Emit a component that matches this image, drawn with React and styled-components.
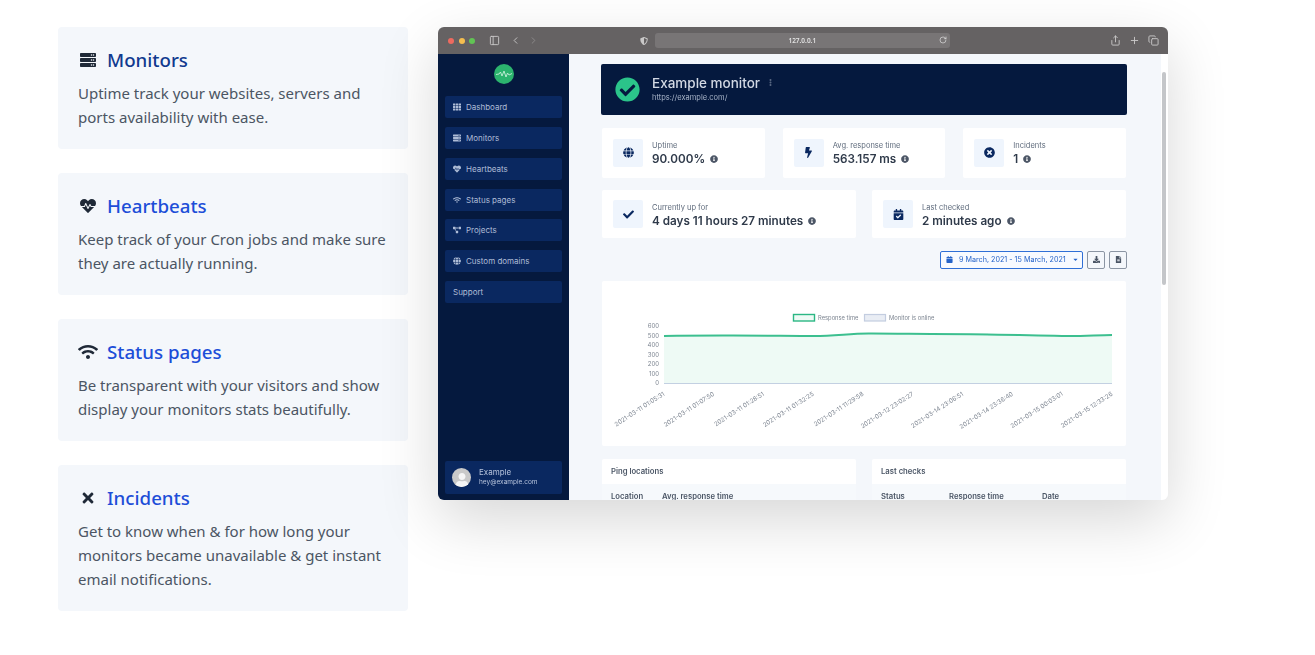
import styled, { createGlobalStyle } from "styled-components";
import {
  FaServer,
  FaHeartbeat,
  FaWifi,
  FaTimes,
  FaGlobe,
  FaBolt,
  FaTimesCircle,
  FaCheck,
  FaCalendarCheck,
  FaCheckCircle,
  FaInfoCircle,
  FaTh,
  FaProjectDiagram,
  FaCalendar,
  FaCaretDown,
  FaDownload,
  FaFileAlt,
  FaEllipsisV,
  FaUser,
  FaShieldAlt,
} from "react-icons/fa";
import { LuChevronLeft, LuChevronRight, LuPanelLeft, LuRotateCw, LuShare, LuPlus, LuCopy } from "react-icons/lu";

const GlobalStyle = createGlobalStyle`
  html, body {
    margin: 0;
    padding: 0;
    background: #fff;
  }
  * {
    box-sizing: border-box;
  }
`;

const Page = styled.div`
  display: flex;
  align-items: flex-start;
  gap: 30px;
  width: 1315px;
  height: 655px;
  padding: 27px 0 0 58px;
  overflow: hidden;
  font-family: "Noto Sans", "Open Sans", sans-serif;
`;

const Features = styled.div`
  display: flex;
  flex-direction: column;
  gap: 24px;
  width: 350px;
  flex-shrink: 0;
`;

const Feature = styled.div`
  background: #f4f7fb;
  border-radius: 4px;
  padding: 20px;
`;

const FeatureTitle = styled.div`
  display: flex;
  align-items: center;
  gap: 9px;
  height: 26px;
  font-size: 18.7px;
  font-weight: 500;
  color: ${(p) => (p.$dark ? "#113a8f" : "#1d4ed8")};
  margin-bottom: 8px;
  padding-bottom: 1px;
`;

const FeatureIcon = styled.span`
  display: flex;
  align-items: center;
  justify-content: center;
  width: 20px;
  height: 20px;
  color: #1f2937;
`;

const FeatureText = styled.p`
  margin: 0;
  font-size: 15px;
  line-height: 24px;
  color: #4b5563;
`;

const Browser = styled.div`
  width: 730px;
  height: 473px;
  flex-shrink: 0;
  border-radius: 6px;
  overflow: hidden;
  box-shadow: 0 20px 60px rgba(0, 0, 0, 0.16);
  display: flex;
  flex-direction: column;
  background: #f4f7fb;
`;

const TitleBar = styled.div`
  height: 27px;
  flex-shrink: 0;
  background: #656263;
  display: flex;
  align-items: center;
  padding: 0 9px 0 10px;
  color: #c9c8c8;
  font-size: 11px;
  filter: blur(0.5px);
`;

const Dot = styled.span`
  width: 6px;
  height: 6px;
  border-radius: 50%;
  margin-right: 4.6px;
  background: ${(p) => p.$color};
`;

const BarButton = styled.span`
  display: flex;
  margin-left: ${(p) => p.$left || 0}px;
  opacity: ${(p) => (p.$dim ? 0.4 : 1)};
`;

const UrlBar = styled.div`
  width: 295px;
  height: 15px;
  margin-left: 7px;
  margin-right: 160px;
  border-radius: 3px;
  background: #787576;
  display: flex;
  align-items: center;
  justify-content: center;
  position: relative;
  font-size: 6.5px;
  font-weight: 600;
  color: #e2e2e2;
`;

const Reload = styled.span`
  position: absolute;
  right: 3px;
  top: 3px;
  display: flex;
  font-size: 8px;
`;

const Body = styled.div`
  flex: 1;
  min-height: 0;
  display: flex;
  filter: blur(0.65px);
`;

const Sidebar = styled.div`
  width: 131px;
  flex-shrink: 0;
  background: #05193e;
  padding: 10px 7px 6px;
  display: flex;
  flex-direction: column;
  gap: 8.9px;
`;

const Logo = styled.div`
  width: 20px;
  height: 20px;
  margin: 0 auto 3px;
  border-radius: 50%;
  background: #2cb46e;
  display: flex;
  align-items: center;
  justify-content: center;
`;

const NavItem = styled.div`
  height: 22px;
  flex-shrink: 0;
  border-radius: 2px;
  background: #0a2860;
  color: #aebcd6;
  font-size: 8px;
  display: flex;
  align-items: center;
  gap: 5px;
  padding-left: 8px;
  font-family: Inter, sans-serif;
  svg {
    font-size: 8px;
    width: 8px;
  }
`;

const UserBox = styled.div`
  margin-top: auto;
  height: 33px;
  border-radius: 2px;
  background: #0a2860;
  display: flex;
  align-items: center;
  gap: 8px;
  padding-left: 7px;
  font-family: Inter, sans-serif;
`;

const Avatar = styled.div`
  width: 19px;
  height: 19px;
  border-radius: 50%;
  background: #c9c9c9;
  color: #f5f5f5;
  display: flex;
  align-items: flex-end;
  justify-content: center;
  overflow: hidden;
  font-size: 14px;
`;

const UserName = styled.div`
  font-size: 8px;
  line-height: 10px;
  color: #b6c3dc;
`;

const UserMail = styled.div`
  font-size: 6.5px;
  line-height: 11px;
  color: #b6c3dc;
`;

const Main = styled.div`
  flex: 1;
  min-width: 0;
  display: flex;
  overflow: hidden;
`;

const Content = styled.div`
  width: 592px;
  padding: 10px 34px 0 32px;
  display: flex;
  flex-direction: column;
  gap: 12.5px;
`;

const Track = styled.div`
  width: 7px;
  background: #fff;
  padding-top: 18px;
`;

const Thumb = styled.div`
  width: 4px;
  height: 213px;
  margin-left: 1px;
  border-radius: 2px;
  background: #c4c6c9;
`;

const Hero = styled.div`
  height: 51px;
  flex-shrink: 0;
  border-radius: 2px;
  background: #05193e;
  display: flex;
  align-items: center;
  gap: 12px;
  padding-left: 14px;
  font-family: Inter, sans-serif;
  color: #d3d9e4;
`;

const HeroCheck = styled.span`
  display: flex;
  width: 25px;
  height: 25px;
  color: #2bc48a;
  font-size: 25px;
`;

const HeroTitle = styled.div`
  display: flex;
  align-items: center;
  gap: 7px;
  font-size: 13.5px;
  font-weight: 500;
  line-height: 16px;
  svg {
    font-size: 7px;
    color: #55647f;
  }
`;

const HeroUrl = styled.div`
  font-size: 7.5px;
  line-height: 14px;
  color: #a9b5c9;
`;

const StatRow = styled.div`
  display: grid;
  grid-template-columns: repeat(${(p) => p.$cols}, 1fr);
  gap: ${(p) => (p.$cols === 3 ? 18 : 16)}px;
  margin: 0 1px;
  flex-shrink: 0;
`;

const Stat = styled.div`
  height: ${(p) => (p.$short ? 48 : 50)}px;
  background: #fff;
  border-radius: 2px;
  display: flex;
  align-items: center;
  gap: 9px;
  padding-left: 11px;
  font-family: Inter, sans-serif;
`;

const StatIcon = styled.span`
  width: 30px;
  height: 28px;
  border-radius: 2px;
  background: #eff5fd;
  color: #0a2860;
  display: flex;
  align-items: center;
  justify-content: center;
  font-size: 11px;
`;

const StatText = styled.div`
  padding-top: ${(p) => (p.$short ? 4 : 2)}px;
`;

const StatLabel = styled.div`
  font-size: 7.5px;
  line-height: 10px;
  color: #5f6b7c;
`;

const StatValue = styled.div`
  display: flex;
  align-items: center;
  gap: 5px;
  font-size: 11.7px;
  font-weight: 600;
  line-height: 16px;
  color: #2f3a4a;
  svg {
    font-size: 8px;
    color: #4c5666;
  }
`;

const Tools = styled.div`
  display: flex;
  justify-content: flex-end;
  gap: 4px;
  height: 18px;
  flex-shrink: 0;
  font-family: Inter, sans-serif;
`;

const DateButton = styled.div`
  width: 143px;
  border: 1px solid #2f6fd6;
  border-radius: 2px;
  background: #f7faff;
  color: #2563c9;
  font-size: 7.2px;
  display: flex;
  align-items: center;
  gap: 6px;
  padding-left: 5px;
  svg {
    font-size: 7px;
  }
`;

const SquareButton = styled.div`
  width: 18px;
  border: 1px solid #8b95a3;
  border-radius: 2px;
  color: #4a5565;
  font-size: 7px;
  display: flex;
  align-items: center;
  justify-content: center;
`;

const ChartCard = styled.div`
  height: 165px;
  flex-shrink: 0;
  margin: 0 1px;
  background: #fff;
  border-radius: 2px;
  svg {
    display: block;
    font-family: Inter, sans-serif;
  }
`;

const Tables = styled.div`
  display: grid;
  grid-template-columns: 1fr 1fr;
  gap: 16px;
  margin: 0 1px;
  font-family: Inter, sans-serif;
`;

const TableCard = styled.div`
  background: #fff;
  border-radius: 2px;
  height: 60px;
`;

const TableTitle = styled.div`
  height: 25px;
  padding: 0 9px;
  display: flex;
  align-items: center;
  font-size: 7.7px;
  font-weight: 600;
  color: #4a5565;
`;

const TableHead = styled.div`
  display: flex;
  height: 25px;
  padding: 0 9px;
  background: #f6f9fc;
  align-items: center;
  font-size: 7.7px;
  font-weight: 600;
  color: #4a5565;
`;

const HeadCell = styled.span`
  width: ${(p) => p.$width}px;
`;

const features = [
  { title: "Monitors", icon: <FaServer size={16} />, dark: true, text: "Uptime track your websites, servers and ports availability with ease." },
  { title: "Heartbeats", icon: <FaHeartbeat size={16} />, text: "Keep track of your Cron jobs and make sure they are actually running." },
  { title: "Status pages", icon: <FaWifi size={20} />, text: "Be transparent with your visitors and show display your monitors stats beautifully." },
  { title: "Incidents", icon: <FaTimes size={16} />, text: "Get to know when & for how long your monitors became unavailable & get instant email notifications." },
];

const nav = [
  { label: "Dashboard", icon: <FaTh /> },
  { label: "Monitors", icon: <FaServer /> },
  { label: "Heartbeats", icon: <FaHeartbeat /> },
  { label: "Status pages", icon: <FaWifi /> },
  { label: "Projects", icon: <FaProjectDiagram /> },
  { label: "Custom domains", icon: <FaGlobe /> },
  { label: "Support" },
];

const topStats = [
  { label: "Uptime", value: "90.000%", icon: <FaGlobe /> },
  { label: "Avg. response time", value: "563.157 ms", icon: <FaBolt /> },
  { label: "Incidents", value: "1", icon: <FaTimesCircle /> },
];

const lowStats = [
  { label: "Currently up for", value: "4 days 11 hours 27 minutes", icon: <FaCheck /> },
  { label: "Last checked", value: "2 minutes ago", icon: <FaCalendarCheck /> },
];

const dates = [
  "2021-03-11 01:05:31",
  "2021-03-11 01:07:50",
  "2021-03-11 01:28:51",
  "2021-03-11 01:32:25",
  "2021-03-11 11:29:58",
  "2021-03-12 23:02:27",
  "2021-03-14 23:06:51",
  "2021-03-14 23:36:40",
  "2021-03-15 00:03:01",
  "2021-03-15 12:33:26",
];

function Chart() {
  const line = "M62 55 C120 54 180 55 212 55 C235 55 250 52 270 52.5 C340 53 400 53 460 55 C480 55.5 495 54 510 54";
  return (
    <svg width="524" height="165" viewBox="0 0 524 165">
      <rect x="191.5" y="33.5" width="21" height="6.5" fill="#eefaf5" stroke="#2bb784" strokeWidth="1.4" />
      <text x="216" y="39" fontSize="5.8" fill="#7d8591">Response time</text>
      <rect x="262.5" y="33.5" width="21" height="6.5" fill="#e9edf4" stroke="#c3cde0" strokeWidth="1.2" />
      <text x="287" y="39" fontSize="5.8" fill="#7d8591">Monitor is online</text>
      {[600, 500, 400, 300, 200, 100, 0].map((v, i) => (
        <text key={v} x="57" y={47 + i * 9.5} fontSize="6" fill="#7d8591" textAnchor="end">{v}</text>
      ))}
      <path d={`${line} L510 102 L62 102 Z`} fill="#eefaf5" />
      <path d={line} fill="none" stroke="#3cbf8f" strokeWidth="2" />
      <line x1="62" y1="102.5" x2="510" y2="102.5" stroke="#c3d0e2" strokeWidth="1.2" />
      {dates.map((d, i) => (
        <text
          key={d}
          x="0"
          y="0"
          fontSize="6.2"
          fill="#7d8591"
          textAnchor="end"
          transform={`translate(${63 + i * 49.8} 114) rotate(-33)`}
        >
          {d}
        </text>
      ))}
    </svg>
  );
}

function Statistic({ item, short }) {
  return (
    <Stat $short={short}>
      <StatIcon>{item.icon}</StatIcon>
      <StatText $short={short}>
        <StatLabel>{item.label}</StatLabel>
        <StatValue>
          {item.value} <FaInfoCircle />
        </StatValue>
      </StatText>
    </Stat>
  );
}

function App() {
  return (
    <>
      <GlobalStyle />
      <Page>
        <Features>
          {features.map((f) => (
            <Feature key={f.title}>
              <FeatureTitle $dark={f.dark}>
                <FeatureIcon>{f.icon}</FeatureIcon>
                {f.title}
              </FeatureTitle>
              <FeatureText>{f.text}</FeatureText>
            </Feature>
          ))}
        </Features>

        <Browser>
          <TitleBar>
            <Dot $color="#ee6a5f" />
            <Dot $color="#f5bd4f" />
            <Dot $color="#61c454" />
            <BarButton $left={9}><LuPanelLeft /></BarButton>
            <BarButton $left={10}><LuChevronLeft /></BarButton>
            <BarButton $left={7} $dim><LuChevronRight /></BarButton>
            <BarButton $left={101}><FaShieldAlt size={8} /></BarButton>
            <UrlBar>
              127.0.0.1
              <Reload><LuRotateCw /></Reload>
            </UrlBar>
            <BarButton><LuShare /></BarButton>
            <BarButton $left={8}><LuPlus /></BarButton>
            <BarButton $left={8}><LuCopy /></BarButton>
          </TitleBar>
          <Body>
            <Sidebar>
              <Logo>
                <svg width="16" height="10" viewBox="0 0 16 10">
                  <path d="M0 5.5 L3 5 L4.5 3 L6 7 L8 2 L10 8 L11.5 4 L13 6 L16 4.5" fill="none" stroke="#d8f5e5" strokeWidth="0.8" />
                </svg>
              </Logo>
              {nav.map((n) => (
                <NavItem key={n.label}>
                  {n.icon}
                  {n.label}
                </NavItem>
              ))}
              <UserBox>
                <Avatar><FaUser /></Avatar>
                <div>
                  <UserName>Example</UserName>
                  <UserMail>hey@example.com</UserMail>
                </div>
              </UserBox>
            </Sidebar>
            <Main>
              <Content>
                <Hero>
                  <HeroCheck><FaCheckCircle /></HeroCheck>
                  <div>
                    <HeroTitle>Example monitor <FaEllipsisV /></HeroTitle>
                    <HeroUrl>https://example.com/</HeroUrl>
                  </div>
                </Hero>
                <StatRow $cols={3}>
                  {topStats.map((s) => <Statistic key={s.label} item={s} />)}
                </StatRow>
                <StatRow $cols={2}>
                  {lowStats.map((s) => <Statistic key={s.label} item={s} short />)}
                </StatRow>
                <Tools>
                  <DateButton>
                    <FaCalendar />
                    9 March, 2021 - 15 March, 2021
                    <FaCaretDown />
                  </DateButton>
                  <SquareButton><FaDownload /></SquareButton>
                  <SquareButton><FaFileAlt /></SquareButton>
                </Tools>
                <ChartCard><Chart /></ChartCard>
                <Tables>
                  <TableCard>
                    <TableTitle>Ping locations</TableTitle>
                    <TableHead>
                      <HeadCell $width={51}>Location</HeadCell>
                      <HeadCell $width={120}>Avg. response time</HeadCell>
                    </TableHead>
                  </TableCard>
                  <TableCard>
                    <TableTitle>Last checks</TableTitle>
                    <TableHead>
                      <HeadCell $width={68}>Status</HeadCell>
                      <HeadCell $width={93}>Response time</HeadCell>
                      <HeadCell $width={40}>Date</HeadCell>
                    </TableHead>
                  </TableCard>
                </Tables>
              </Content>
              <Track><Thumb /></Track>
            </Main>
          </Body>
        </Browser>
      </Page>
    </>
  );
}

export default App;
